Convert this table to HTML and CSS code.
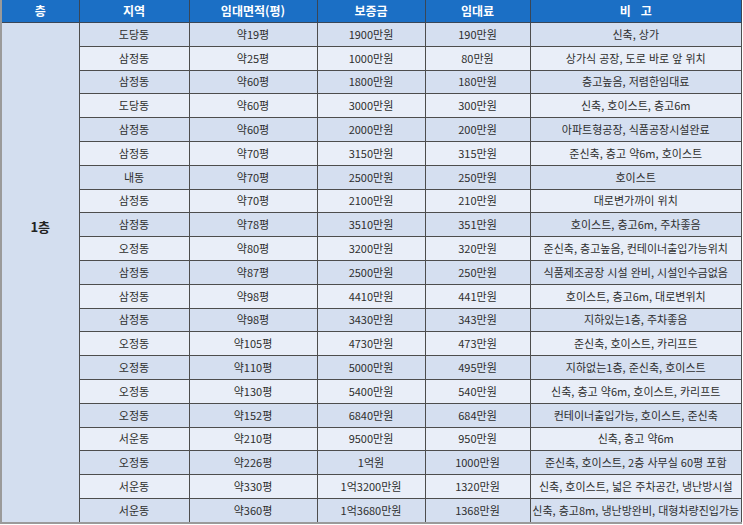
FILE: index.html
```html
<!DOCTYPE html>
<html lang="ko">
<head>
<meta charset="utf-8">
<title>1층 임대 목록</title>
<link rel="stylesheet" href="styles.css">
</head>
<body>
<table class="rent">
  <colgroup>
    <col class="c-floor"><col class="c-area"><col class="c-size"><col class="c-dep"><col class="c-rent"><col class="c-note">
  </colgroup>
  <thead>
    <tr><th>층</th><th>지역</th><th>임대면적(평)</th><th>보증금</th><th>임대료</th><th>비&nbsp;&nbsp;&nbsp;고</th></tr>
  </thead>
  <tbody>
    <tr class="dark"><td class="floor" rowspan="21">1층</td><td>도당동</td><td>약19평</td><td>1900만원</td><td>190만원</td><td>신축, 상가</td></tr>
    <tr class="light"><td>삼정동</td><td>약25평</td><td>1000만원</td><td>80만원</td><td>상가식 공장, 도로 바로 앞 위치</td></tr>
    <tr class="dark"><td>삼정동</td><td>약60평</td><td>1800만원</td><td>180만원</td><td>층고높음, 저렴한임대료</td></tr>
    <tr class="light"><td>도당동</td><td>약60평</td><td>3000만원</td><td>300만원</td><td>신축, 호이스트, 층고6m</td></tr>
    <tr class="dark"><td>삼정동</td><td>약60평</td><td>2000만원</td><td>200만원</td><td>아파트형공장, 식품공장시설완료</td></tr>
    <tr class="light"><td>삼정동</td><td>약70평</td><td>3150만원</td><td>315만원</td><td>준신축, 층고 약6m, 호이스트</td></tr>
    <tr class="dark"><td>내동</td><td>약70평</td><td>2500만원</td><td>250만원</td><td>호이스트</td></tr>
    <tr class="light"><td>삼정동</td><td>약70평</td><td>2100만원</td><td>210만원</td><td>대로변가까이 위치</td></tr>
    <tr class="dark"><td>삼정동</td><td>약78평</td><td>3510만원</td><td>351만원</td><td>호이스트, 층고6m, 주차좋음</td></tr>
    <tr class="light"><td>오정동</td><td>약80평</td><td>3200만원</td><td>320만원</td><td>준신축, 층고높음, 컨테이너출입가능위치</td></tr>
    <tr class="dark"><td>삼정동</td><td>약87평</td><td>2500만원</td><td>250만원</td><td>식품제조공장 시설 완비, 시설인수금없음</td></tr>
    <tr class="light"><td>삼정동</td><td>약98평</td><td>4410만원</td><td>441만원</td><td>호이스트, 층고6m, 대로변위치</td></tr>
    <tr class="dark"><td>삼정동</td><td>약98평</td><td>3430만원</td><td>343만원</td><td>지하있는1층, 주차좋음</td></tr>
    <tr class="light"><td>오정동</td><td>약105평</td><td>4730만원</td><td>473만원</td><td>준신축, 호이스트, 카리프트</td></tr>
    <tr class="dark"><td>오정동</td><td>약110평</td><td>5000만원</td><td>495만원</td><td>지하없는1층, 준신축, 호이스트</td></tr>
    <tr class="light"><td>오정동</td><td>약130평</td><td>5400만원</td><td>540만원</td><td>신축, 층고 약6m, 호이스트, 카리프트</td></tr>
    <tr class="dark"><td>오정동</td><td>약152평</td><td>6840만원</td><td>684만원</td><td>컨테이너출입가능, 호이스트, 준신축</td></tr>
    <tr class="light"><td>서운동</td><td>약210평</td><td>9500만원</td><td>950만원</td><td>신축, 층고 약6m</td></tr>
    <tr class="dark"><td>오정동</td><td>약226평</td><td>1억원</td><td>1000만원</td><td>준신축, 호이스트, 2층 사무실 60평 포함</td></tr>
    <tr class="light"><td>서운동</td><td>약330평</td><td>1억3200만원</td><td>1320만원</td><td>신축, 호이스트, 넓은 주차공간, 냉난방시설</td></tr>
    <tr class="dark"><td>서운동</td><td>약360평</td><td>1억3680만원</td><td>1368만원</td><td>신축, 층고8m, 냉난방완비, 대형차량진입가능</td></tr>
  </tbody>
</table>
</body>
</html>
```
FILE: styles.css
```css
html, body {
  margin: 0;
  padding: 0;
  background: #ffffff;
}
.rent {
  border-collapse: collapse;
  table-layout: fixed;
  width: 742px;
  font-family: "Noto Sans CJK KR", "Noto Sans", sans-serif;
  color: #2e2e2e;
  border-left: 2px solid #9a9a9a;
  border-right: 1px solid #9a9a9a;
  border-bottom: 2px solid #9a9a9a;
}
.c-floor { width: 78px; }
.c-area { width: 110px; }
.c-size { width: 128px; }
.c-dep { width: 108px; }
.c-rent { width: 105px; }
.c-note { width: auto; }
.rent th {
  height: 22px;
  padding: 0;
  background: #1b6fc5;
  color: #ffffff;
  font-size: 12px;
  font-weight: 700;
  text-align: center;
  vertical-align: middle;
  border: 1px solid #3a4656;
  border-top: none;
  line-height: 14px;
}
.rent th:first-child { border-left: none; }
.rent td {
  height: 22.8px;
  padding: 0;
  font-size: 11px;
  line-height: 13px;
  text-align: center;
  vertical-align: middle;
  border: 1px solid #4d4d4d;
  white-space: nowrap;
  overflow: hidden;
}
.rent tr.dark td { background: #d5dff0; }
.rent tr.light td { background: #e9eef8; }
.rent td.floor {
  background: #d3deef;
  font-size: 13px;
  font-weight: 700;
  color: #222222;
  border-left: none;
  border-bottom: none;
  vertical-align: top;
  padding-top: 196px;
  line-height: 16px;
}
.rent tr.dark td.floor { background: #d3deef; }
```
